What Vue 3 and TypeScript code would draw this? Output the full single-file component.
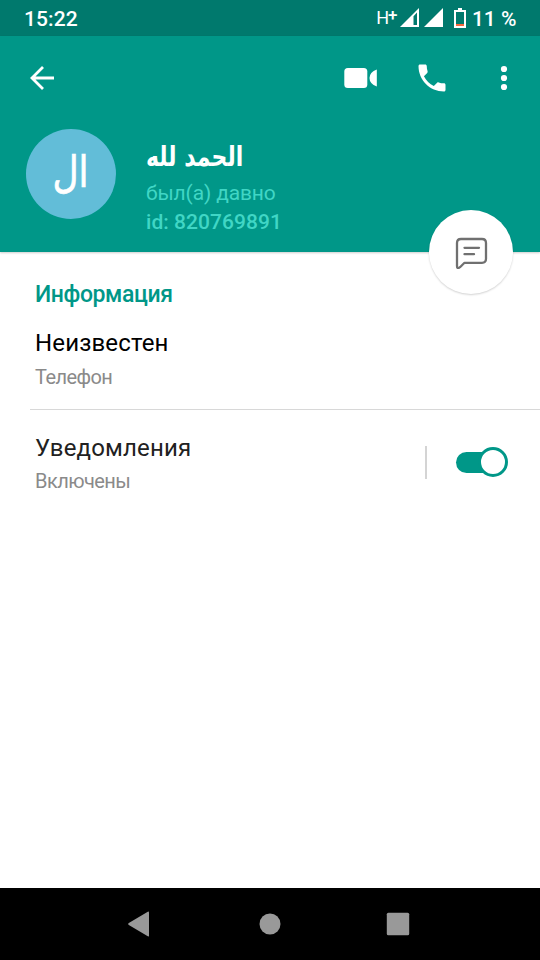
<script setup lang="ts">
import { ref } from 'vue'

interface Contact {
  name: string
  initials: string
  seen: string
  id: string
}

const contact: Contact = {
  name: 'الحمد لله',
  initials: 'ال',
  seen: 'был(а) давно',
  id: 'id: 820769891',
}
const notificationsOn = ref(true)
</script>

<template>
  <div class="screen">
    <div class="status">
      <span class="clock">15:22</span>
      <div class="indicators">
        <span class="network">H<span class="plus">+</span></span>
        <svg class="signal" width="19" height="19" viewBox="0 0 19 19">
          <path d="M0 19 19 0V19Z M13.5 8.2V17H17V4.5Z" fill="#fff" fill-rule="evenodd" />
        </svg>
        <svg class="signal" width="19" height="19" viewBox="0 0 19 19">
          <path d="M0 19 19 0V19Z" fill="#fff" />
        </svg>
        <svg class="battery" width="12" height="20" viewBox="0 0 12 20">
          <path d="M4 0H8V2H12V20H0V2H4Z M2 4V18H10V4Z" fill="#fff" fill-rule="evenodd" />
          <path d="M2 16H10V18H2Z" fill="#f4663c" />
        </svg>
        <span class="percent">11 %</span>
      </div>
    </div>

    <header class="header">
      <div class="toolbar">
        <button class="tool" aria-label="Назад">
          <svg width="26" height="26" viewBox="0 0 26 26" fill="none" stroke="#fff" stroke-width="2.8">
            <path d="M25 13H3M14 2 3 13 14 24" />
          </svg>
        </button>
        <div class="actions">
          <button class="tool" aria-label="Видеозвонок">
            <svg width="34" height="22" viewBox="0 0 34 22" fill="#fff">
              <rect x="1.3" y="1" width="23" height="20" rx="3.5" />
              <path d="M33.8 2.5V19.5Q26.5 16.8 26.5 11T33.8 2.5Z" />
            </svg>
          </button>
          <button class="tool" aria-label="Звонок">
            <svg width="36" height="36" viewBox="0 0 24 24" fill="#fff">
              <path d="M6.62 10.79c1.44 2.83 3.76 5.14 6.59 6.59l2.2-2.2c.27-.27.67-.36 1.02-.24 1.12.37 2.33.57 3.57.57.55 0 1 .45 1 1V20c0 .55-.45 1-1 1C10.61 21 3 13.39 3 4c0-.55.45-1 1-1h3.5c.55 0 1 .45 1 1 0 1.25.2 2.45.57 3.57.11.35.03.74-.25 1.02l-2.2 2.2z" />
            </svg>
          </button>
          <button class="tool" aria-label="Меню">
            <svg width="8" height="26" viewBox="0 0 8 26" fill="#fff">
              <circle cx="4" cy="4" r="3.1" />
              <circle cx="4" cy="13" r="3.1" />
              <circle cx="4" cy="22" r="3.1" />
            </svg>
          </button>
        </div>
      </div>

      <div class="profile">
        <div class="avatar"><span dir="rtl">{{ contact.initials }}</span></div>
        <div class="who">
          <h1 dir="rtl">{{ contact.name }}</h1>
          <p class="seen">{{ contact.seen }}</p>
          <p class="ident">{{ contact.id }}</p>
        </div>
      </div>

      <button class="fab" aria-label="Сообщение">
        <svg width="34" height="34" viewBox="0 0 34 34" fill="none" stroke="#707070" stroke-width="2.3" stroke-linecap="round" stroke-linejoin="round">
          <path d="M7 4H28Q32 4 32 8V23.8Q32 27.8 28 27.8H10.5L6 32.2Q3 34.5 3 31V8Q3 4 7 4Z" />
          <path d="M10.5 12.8H25M10.5 19.2H20" />
        </svg>
      </button>
    </header>

    <main class="content">
      <h2>Информация</h2>
      <div class="row phone">
        <p class="title">Неизвестен</p>
        <p class="sub">Телефон</p>
      </div>
      <div class="row notify">
        <div>
          <p class="title soft">Уведомления</p>
          <p class="sub">Включены</p>
        </div>
        <button class="toggle" :class="{ on: notificationsOn }" role="switch" :aria-checked="notificationsOn" @click="notificationsOn = !notificationsOn">
          <span class="track"></span>
          <span class="knob"></span>
        </button>
      </div>
    </main>

    <nav class="nav">
      <svg width="24" height="26" viewBox="0 0 24 26" fill="#999"><path d="M1.8 12 20.8 .8Q22 .2 22 1.5V24.5Q22 25.8 20.8 25.2L1.8 14Q.2 13 1.8 12Z" /></svg>
      <svg width="22" height="22" viewBox="0 0 22 22" fill="#999"><circle cx="11" cy="11" r="10.5" /></svg>
      <svg width="24" height="24" viewBox="0 0 24 24" fill="#999"><rect x="0.8" y="0.8" width="22.4" height="22.4" rx="1.5" /></svg>
    </nav>
  </div>
</template>

<style>
body {
  margin: 0;
  background: #fff;
}
</style>

<style scoped>
.screen {
  width: 540px;
  height: 960px;
  display: flex;
  flex-direction: column;
  overflow: hidden;
  background: #fff;
  font-family: Roboto, "Noto Sans", sans-serif;
}
p, h1, h2 {
  margin: 0;
  white-space: nowrap;
}
button {
  padding: 0;
  border: 0;
  background: none;
  font: inherit;
}
svg {
  display: block;
  flex: none;
}
.status {
  height: 36px;
  box-sizing: border-box;
  padding: 0 24px;
  display: flex;
  align-items: center;
  justify-content: space-between;
  background: #00796d;
  color: #fff;
  font-size: 21px;
  font-weight: 500;
}
.clock {
  line-height: 36px;
  padding-top: 2px;
  letter-spacing: 0.1px;
}
.indicators {
  display: flex;
  align-items: center;
}
.network {
  display: flex;
  align-items: flex-start;
  height: 22px;
  line-height: 22px;
  font-size: 18px;
  font-weight: 400;
  letter-spacing: -1.5px;
}
.plus {
  font-size: 17px;
  line-height: 17px;
  font-weight: 500;
  margin-left: 0.5px;
}
.signal {
  margin: 0 0 1px 4.5px;
}
.battery {
  margin: 0 6px 1px 11px;
}
.percent {
  line-height: 36px;
  padding-top: 2px;
  margin-right: -0.5px;
}
.header {
  position: relative;
  height: 216px;
  background: #009788;
  box-shadow: 0 1px 2px rgba(0, 0, 0, 0.2);
}
.toolbar {
  height: 84px;
  padding: 0 18px 0 24px;
  display: flex;
  align-items: center;
  justify-content: space-between;
}
.tool {
  width: 36px;
  height: 48px;
  display: flex;
  align-items: center;
  justify-content: center;
}
.actions {
  display: flex;
  gap: 36px;
}
.profile {
  display: flex;
  gap: 30.5px;
  padding: 9px 26px 0 25.5px;
}
.avatar {
  width: 90px;
  height: 90px;
  border-radius: 50%;
  background: #62bdd8;
  color: #fff;
  display: flex;
  align-items: center;
  justify-content: center;
  font: 36px/60px "DejaVu Sans", sans-serif;
}
.avatar span {
  transform: translateY(-1px) scaleY(1.2);
  -webkit-text-stroke: 0.6px #fff;
}
.who {
  padding-top: 14px;
  display: flex;
  flex-direction: column;
  align-items: flex-start;
}
h1 {
  color: #fff;
  font: 700 24px/36px "DejaVu Sans", sans-serif;
  transform: scale(0.915, 1.14);
  transform-origin: 0 58%;
  margin-top: -4px;
  margin-bottom: 4px;
}
.seen, .ident {
  color: #40d6c5;
  font-size: 21px;
  line-height: 29px;
}
.seen {
  letter-spacing: -0.15px;
}
.ident {
  font-weight: 500;
  letter-spacing: 0.04px;
}
.fab {
  position: absolute;
  right: 27px;
  bottom: -42px;
  width: 84px;
  height: 84px;
  border-radius: 50%;
  background: #fff;
  box-shadow: 0 1px 2px rgba(0, 0, 0, 0.18);
  display: flex;
  align-items: center;
  justify-content: center;
}
.content {
  flex: 1;
  padding-top: 27px;
}
h2 {
  padding-left: 35px;
  color: #009788;
  font-size: 23px;
  font-weight: 500;
  line-height: 32px;
  letter-spacing: -0.4px;
}
.row {
  margin-left: 30px;
  padding-left: 5px;
}
.title {
  color: #000;
  font-size: 24px;
  line-height: 34px;
  letter-spacing: 0.15px;
}
.soft {
  color: #212121;
}
.sub {
  color: #8a8a8a;
  font-size: 20px;
  line-height: 34px;
  letter-spacing: -0.55px;
}
.phone {
  height: 83px;
  padding-top: 15px;
  border-bottom: 1px solid #d8d8d8;
}
.notify {
  padding-top: 21px;
  padding-right: 32px;
  display: flex;
  align-items: center;
  justify-content: space-between;
}
.notify .sub {
  line-height: 32px;
  padding-bottom: 2px;
}
.toggle {
  display: flex;
  align-items: center;
  height: 33px;
  border-left: 2px solid #d4d4d4;
  padding-left: 29px;
  margin-bottom: 6px;
}
.track {
  width: 38px;
  height: 21px;
  border-radius: 11px;
  background: #aaa;
}
.knob {
  width: 30px;
  height: 30px;
  box-sizing: border-box;
  margin-left: -16px;
  border: 3px solid #aaa;
  border-radius: 50%;
  background: #fff;
}
.on .track {
  background: #009788;
}
.on .knob {
  border-color: #009788;
}
.nav {
  height: 72px;
  box-sizing: border-box;
  padding: 0 130px 0 127px;
  background: #000;
  display: flex;
  align-items: center;
  justify-content: space-between;
}
.nav svg:nth-child(2) {
  margin-left: 2px;
}
</style>
